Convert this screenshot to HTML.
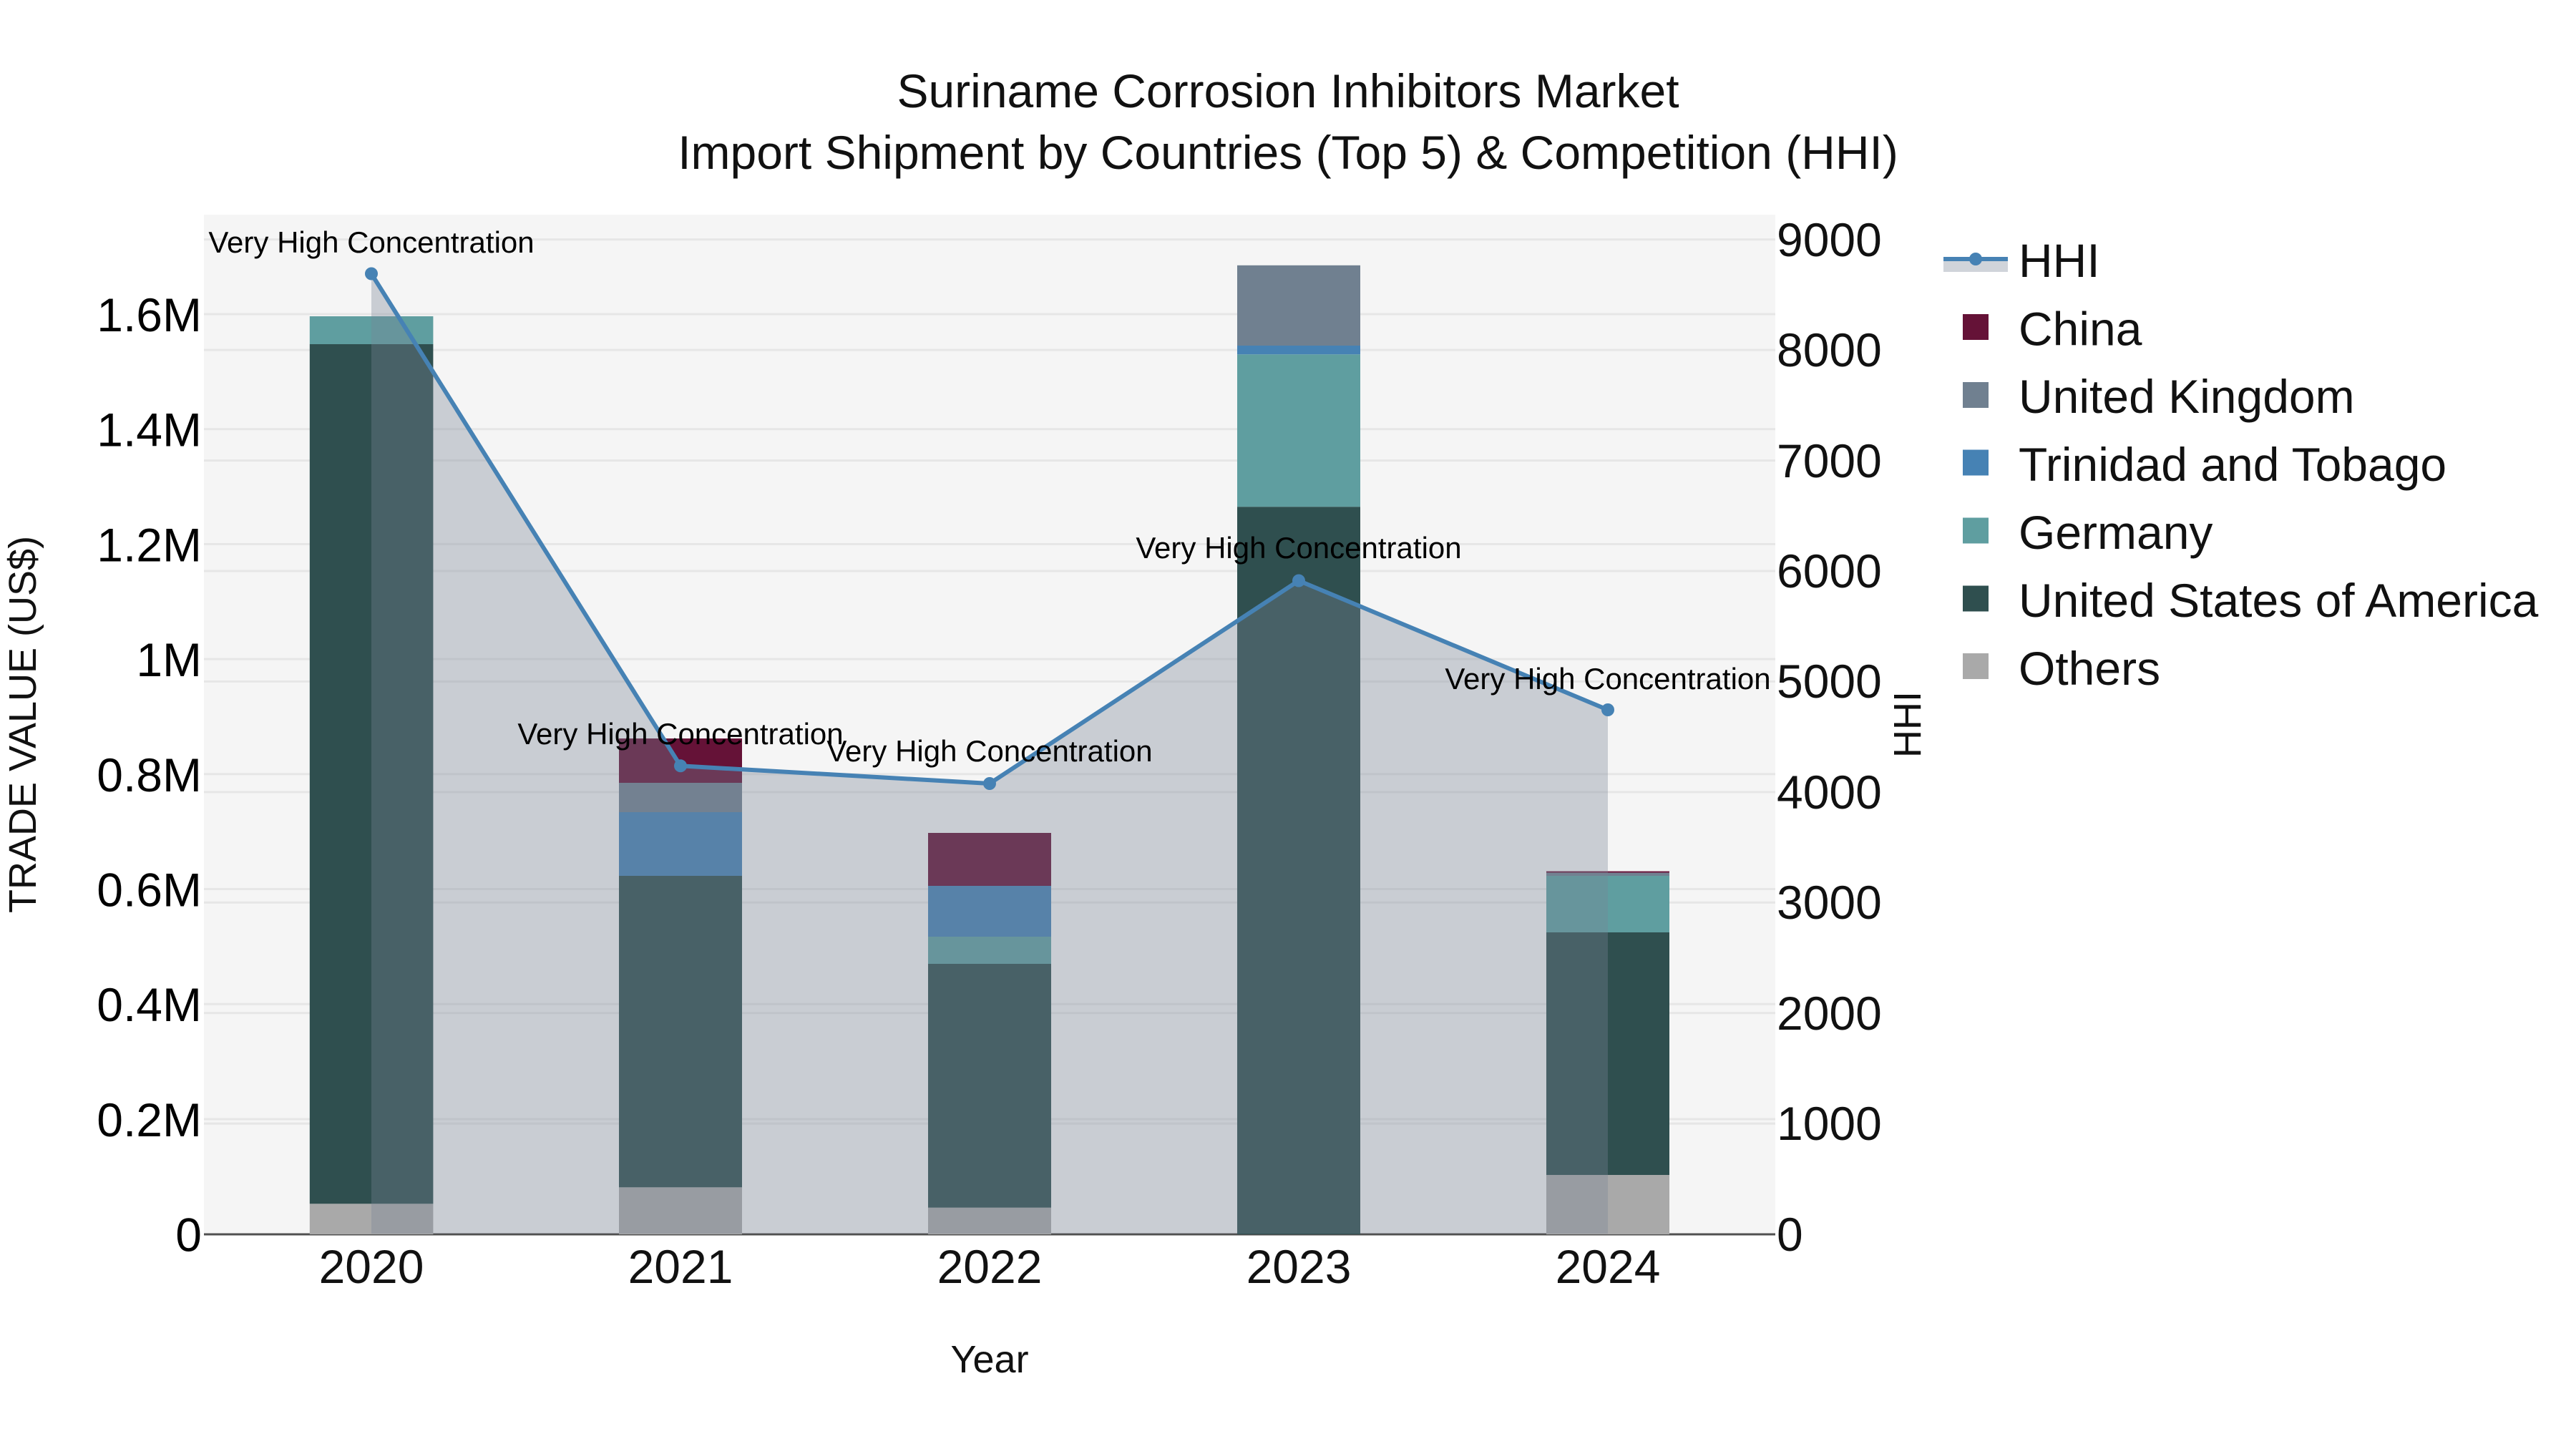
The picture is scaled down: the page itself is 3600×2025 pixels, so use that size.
<!DOCTYPE html>
<html><head><meta charset="utf-8"><style>html,body{margin:0;padding:0;background:#fff;width:3600px;height:2025px;overflow:hidden}svg{display:block}text{font-family:"Liberation Sans",Arial,sans-serif}</style></head>
<body>
<svg width="3600" height="2025" viewBox="0 0 3600 2025" xmlns="http://www.w3.org/2000/svg">
<rect width="3600" height="2025" fill="#fff"/>
<rect x="285" y="300" width="2196" height="1425" fill="#f5f5f5"/>
<g fill="#e6e6e6">
<rect x="285" y="1562.5" width="2196" height="3"/><rect x="285" y="1401.7" width="2196" height="3"/><rect x="285" y="1241" width="2196" height="3"/><rect x="285" y="1080.3" width="2196" height="3"/><rect x="285" y="919.6" width="2196" height="3"/><rect x="285" y="758.9" width="2196" height="3"/><rect x="285" y="598.2" width="2196" height="3"/><rect x="285" y="437.5" width="2196" height="3"/>
<rect x="285" y="1568.7" width="2196" height="3"/><rect x="285" y="1414.2" width="2196" height="3"/><rect x="285" y="1259.8" width="2196" height="3"/><rect x="285" y="1105.4" width="2196" height="3"/><rect x="285" y="950.9" width="2196" height="3"/><rect x="285" y="796.5" width="2196" height="3"/><rect x="285" y="642.1" width="2196" height="3"/><rect x="285" y="487.6" width="2196" height="3"/><rect x="285" y="333.2" width="2196" height="3"/>
</g>
<rect x="285" y="1723.5" width="2196" height="3" fill="#505050"/>
<!-- bars -->
<g>
<rect x="432.8" y="1682.3" width="172.6" height="42.7" fill="#a9a9a9"/>
<rect x="432.8" y="481" width="172.6" height="1201.3" fill="#2f4f4f"/>
<rect x="432.8" y="442" width="172.6" height="39" fill="#5f9ea0"/>

<rect x="865" y="1659.3" width="172" height="65.7" fill="#a9a9a9"/>
<rect x="865" y="1224" width="172" height="435.3" fill="#2f4f4f"/>
<rect x="865" y="1135" width="172" height="89" fill="#4682b4"/>
<rect x="865" y="1094" width="172" height="41" fill="#708090"/>
<rect x="865" y="1032" width="172" height="62" fill="#651237"/>

<rect x="1297" y="1687.7" width="172" height="37.3" fill="#a9a9a9"/>
<rect x="1297" y="1347" width="172" height="340.7" fill="#2f4f4f"/>
<rect x="1297" y="1309" width="172" height="38" fill="#5f9ea0"/>
<rect x="1297" y="1238" width="172" height="71" fill="#4682b4"/>
<rect x="1297" y="1164" width="172" height="74" fill="#651237"/>

<rect x="1729" y="708.2" width="172" height="1016.8" fill="#2f4f4f"/>
<rect x="1729" y="495.2" width="172" height="213" fill="#5f9ea0"/>
<rect x="1729" y="483" width="172" height="12.2" fill="#4682b4"/>
<rect x="1729" y="370.8" width="172" height="112.2" fill="#708090"/>

<rect x="2161" y="1642" width="172" height="83" fill="#a9a9a9"/>
<rect x="2161" y="1303" width="172" height="339" fill="#2f4f4f"/>
<rect x="2161" y="1224" width="172" height="79" fill="#5f9ea0"/>
<rect x="2161" y="1219.6" width="172" height="4.4" fill="#708090"/>
<rect x="2161" y="1217.6" width="172" height="2" fill="#651237"/>
</g>
<!-- HHI area -->
<polygon points="519,382.5 951,1070.3 1383,1095 1815,811.5 2247,992 2247,1724 519,1724" fill="#788396" fill-opacity="0.35"/>
<polyline points="519,382.5 951,1070.3 1383,1095 1815,811.5 2247,992" fill="none" stroke="#4682b4" stroke-width="6" stroke-linejoin="round"/>
<g fill="#4682b4"><circle cx="519" cy="382.5" r="9"/><circle cx="951" cy="1070.3" r="9"/><circle cx="1383" cy="1095" r="9"/><circle cx="1815" cy="811.5" r="9"/><circle cx="2247" cy="992" r="9"/></g>
<g font-size="42" fill="#000" text-anchor="middle">
<text x="519" y="353">Very High Concentration</text>
<text x="951" y="1040">Very High Concentration</text>
<text x="1383" y="1064">Very High Concentration</text>
<text x="1815" y="780">Very High Concentration</text>
<text x="2247" y="963">Very High Concentration</text>
</g>
<!-- left ticks -->
<g font-size="66" fill="#000" text-anchor="end">
<text x="282" y="1748.6">0</text><text x="282" y="1587.9">0.2M</text><text x="282" y="1427.2">0.4M</text><text x="282" y="1266.5">0.6M</text><text x="282" y="1105.8">0.8M</text><text x="282" y="945.1">1M</text><text x="282" y="784.4">1.2M</text><text x="282" y="623.7">1.4M</text><text x="282" y="463">1.6M</text>
</g>
<!-- right ticks -->
<g font-size="66" fill="#111" text-anchor="start">
<text x="2483" y="1748">0</text><text x="2483" y="1593">1000</text><text x="2483" y="1439">2000</text><text x="2483" y="1284">3000</text><text x="2483" y="1130">4000</text><text x="2483" y="975">5000</text><text x="2483" y="821">6000</text><text x="2483" y="667">7000</text><text x="2483" y="512">8000</text><text x="2483" y="358">9000</text>
</g>
<!-- x ticks -->
<g font-size="66" fill="#111" text-anchor="middle">
<text x="519" y="1793">2020</text><text x="951" y="1793">2021</text><text x="1383" y="1793">2022</text><text x="1815" y="1793">2023</text><text x="2247" y="1793">2024</text>
</g>
<!-- titles -->
<g font-size="66" fill="#111" text-anchor="middle">
<text x="1800" y="150">Suriname Corrosion Inhibitors Market</text>
<text x="1800" y="236">Import Shipment by Countries (Top 5) &amp; Competition (HHI)</text>
</g>
<text x="1383" y="1918" font-size="54" fill="#111" text-anchor="middle">Year</text>
<text transform="translate(50 1012.5) rotate(-90)" font-size="54" fill="#111" text-anchor="middle">TRADE VALUE (US$)</text>
<text transform="translate(2684 1012.5) rotate(-90)" font-size="54" fill="#111" text-anchor="middle">HHI</text>
<!-- legend -->
<rect x="2716" y="362" width="90" height="18" fill="#788396" fill-opacity="0.35"/>
<rect x="2716" y="359" width="90" height="6" fill="#4682b4"/>
<circle cx="2761" cy="362" r="9" fill="#4682b4"/>
<g>
<rect x="2743" y="439" width="36" height="36" fill="#651237"/>
<rect x="2743" y="534" width="36" height="36" fill="#708090"/>
<rect x="2743" y="628.5" width="36" height="36" fill="#4682b4"/>
<rect x="2743" y="723.5" width="36" height="36" fill="#5f9ea0"/>
<rect x="2743" y="818.5" width="36" height="36" fill="#2f4f4f"/>
<rect x="2743" y="913" width="36" height="36" fill="#a9a9a9"/>
</g>
<g font-size="66" fill="#111">
<text x="2821" y="387">HHI</text><text x="2821" y="482.5">China</text><text x="2821" y="577">United Kingdom</text><text x="2821" y="672">Trinidad and Tobago</text><text x="2821" y="767">Germany</text><text x="2821" y="862">United States of America</text><text x="2821" y="957">Others</text>
</g>
</svg>
</body></html>
